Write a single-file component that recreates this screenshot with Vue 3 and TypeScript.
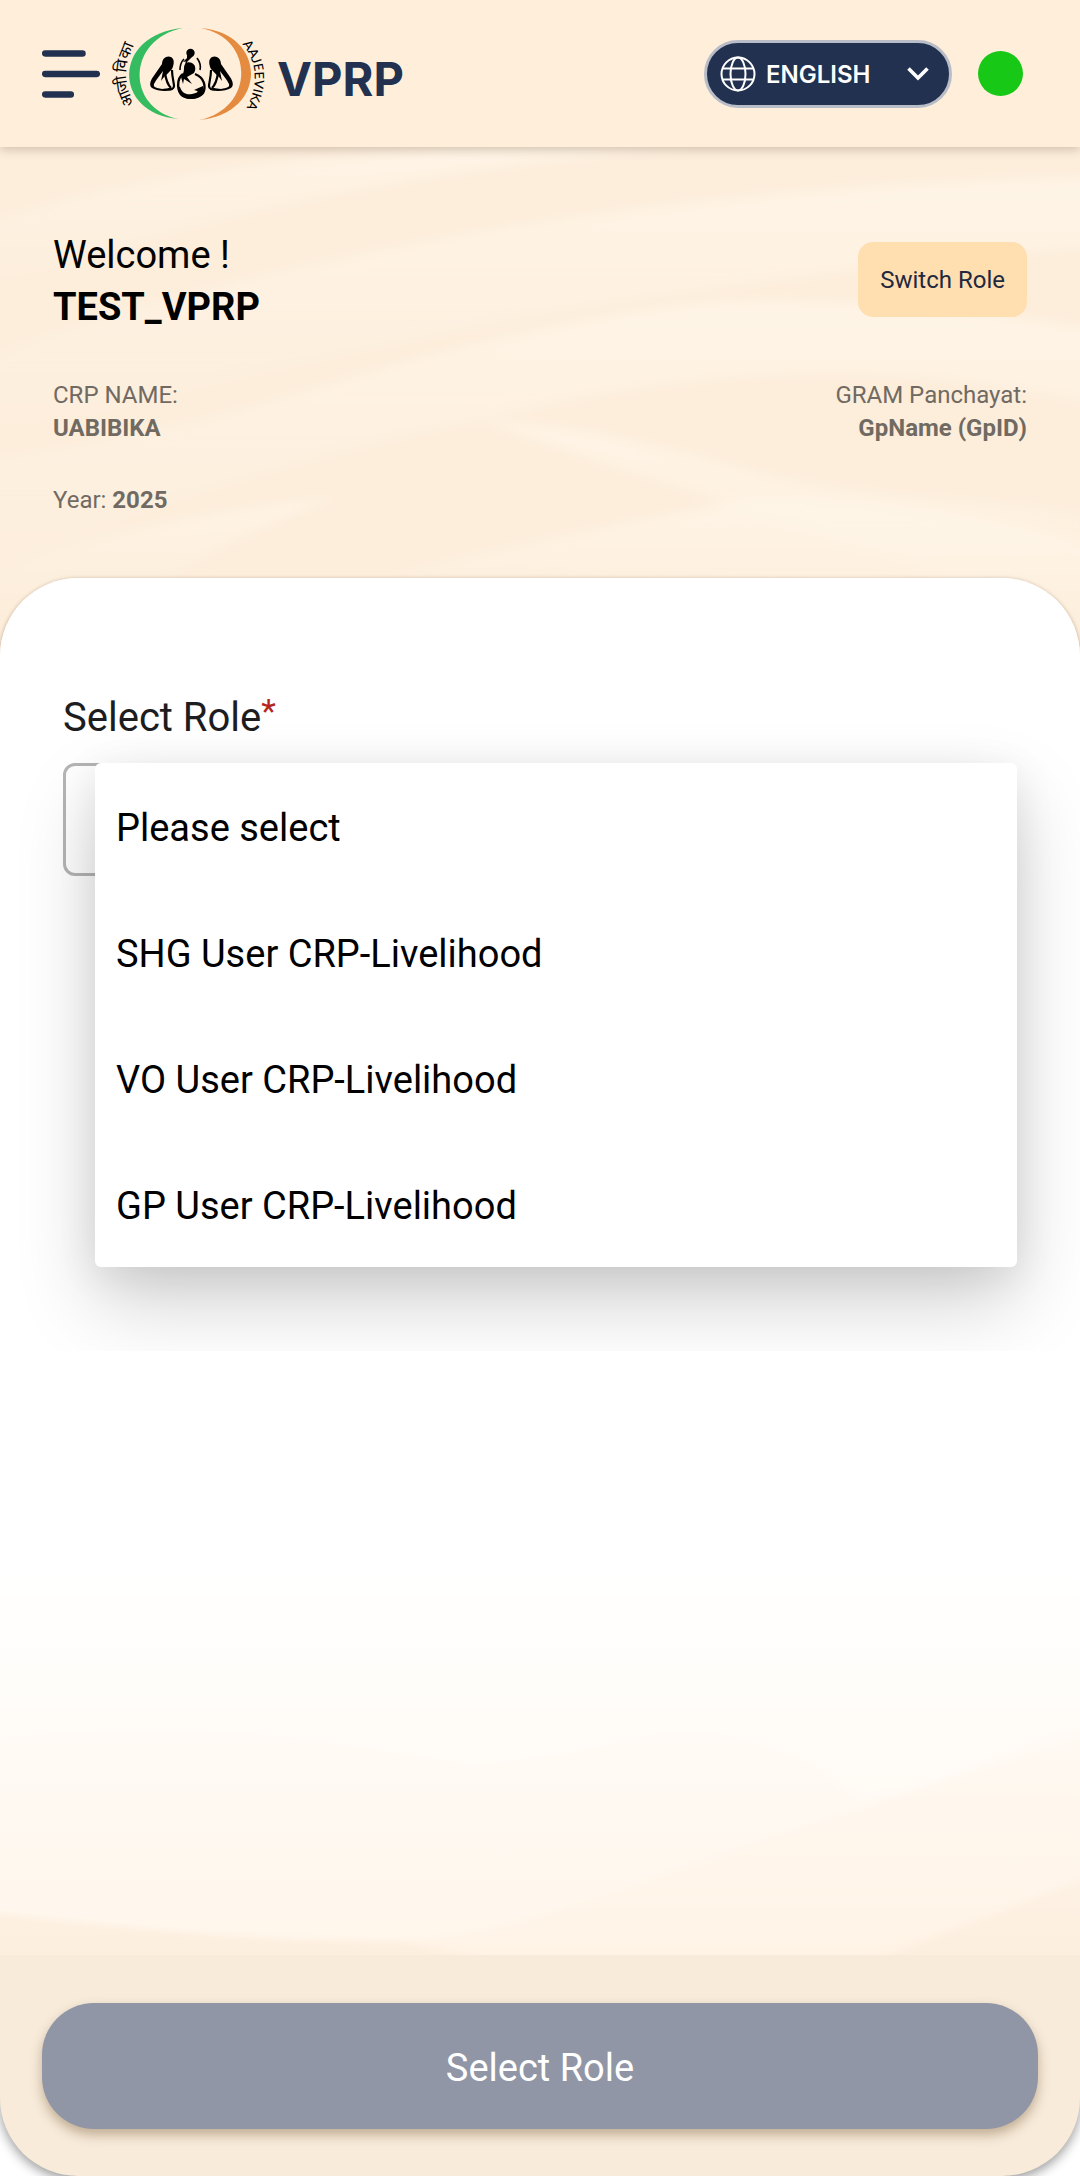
<script setup lang="ts">
import { ref } from 'vue'

interface Fact {
  label: string
  value: string
}

const languages: string[] = ['ENGLISH']
const language = ref<string>('ENGLISH')

const facts: Fact[] = [
  { label: 'CRP NAME:', value: 'UABIBIKA' },
  { label: 'GRAM Panchayat:', value: 'GpName (GpID)' },
]

const roles: string[] = [
  'Please select',
  'SHG User CRP-Livelihood',
  'VO User CRP-Livelihood',
  'GP User CRP-Livelihood',
]
const role = ref<string>('Please select')
const menuOpen = ref<boolean>(true)

function pick(name: string): void {
  role.value = name
  menuOpen.value = false
}
</script>

<template>
  <div class="screen">
    <header class="topbar">
      <button class="menu-button" type="button" aria-label="Open menu">
        <svg width="58" height="50" viewBox="0 0 58 50" fill="none" stroke="#22314f" stroke-width="6.5" stroke-linecap="round">
          <path d="M3.2 4.5H40.5M3.2 25H54.8M3.2 45.5H28.8" />
        </svg>
      </button>
      <svg class="logo" viewBox="110 20 160 106" role="img" aria-label="Aajeevika">
        <path fill="#35bb60" d="M183 27C112 33 112 113 179 118C126 108 126 38 183 27Z" />
        <path fill="#e58b40" d="M201 27C268 33 268 113 199 119C254 108 256 38 201 27Z" />
        <defs>
          <path id="arc-right" d="M242 43Q268 74 241 116" />
        </defs>
        <g class="logo-hindi">
          <text transform="translate(134 103) rotate(-112)">आ</text>
          <text transform="translate(128 90) rotate(-98)">जी</text>
          <text transform="translate(126 72) rotate(-82)">वि</text>
          <text transform="translate(128 59) rotate(-68)">का</text>
        </g>
        <text class="logo-latin"><textPath href="#arc-right">AAJEEVIKA</textPath></text>
        <g>
          <path d="M162 63C162 57 167 54 171 56C175 58 174 64 172 68C169 72 164 75 161 80L163 70C160 74 156 79 154 83C153 86 156 87 162 88L170 87L172 89C166 91 157 90 152 87C149 85 150 80 153 76Z" />
          <path d="M165 72C166 79 168 84 171 87M172 69C172 76 174 82 174 85C174 88 171 89 168 88" fill="none" stroke="#000" stroke-width="2.2" />
        </g>
        <g transform="translate(383 0) scale(-1 1)">
          <path d="M162 63C162 57 167 54 171 56C175 58 174 64 172 68C169 72 164 75 161 80L163 70C160 74 156 79 154 83C153 86 156 87 162 88L170 87L172 89C166 91 157 90 152 87C149 85 150 80 153 76Z" />
          <path d="M165 72C166 79 168 84 171 87M172 69C172 76 174 82 174 85C174 88 171 89 168 88" fill="none" stroke="#000" stroke-width="2.2" />
        </g>
        <circle cx="190.5" cy="52" r="4.2" />
        <path d="M187 54L192 56L188 60L183 61L187 57Z" />
        <path d="M184 58C181 61 180 65 180 69M197 57C200 61 201 65 200 69M187 59L186 63" fill="none" stroke="#000" stroke-width="1.6" />
        <path d="M184 67C184 62 188 60 192 62C196 64 196 69 194 72L187 76L192 83L184 78L183 83L181 76C183 73 184 71 184 67Z" />
        <path d="M183 73C176 78 177 91 183 95C189 98 199 97 203 92C206 86 205 77 195 73" fill="none" stroke="#000" stroke-width="2.4" />
        <path d="M180 86C182 92 186 94 192 93C198 92 200 90 194 89L203 85C205 92 201 98 191 98C182 98 178 93 178 86Z" />
      </svg>
      <h1 class="brand">VPRP</h1>
      <label class="language">
        <svg width="36" height="36" viewBox="0 0 36 36" fill="none" stroke="#fff" stroke-width="2" aria-hidden="true">
          <circle cx="18" cy="18" r="16.5" />
          <ellipse cx="18" cy="18" rx="7.5" ry="16.5" />
          <path d="M2.5 12.5H33.5M2.5 23.5H33.5" />
        </svg>
        <select v-model="language" aria-label="Language">
          <option v-for="item in languages" :key="item">{{ item }}</option>
        </select>
        <svg width="22" height="14" viewBox="0 0 22 14" fill="none" stroke="#fff" stroke-width="3.6" aria-hidden="true">
          <path d="M1.5 1.5L11 11L20.5 1.5" />
        </svg>
      </label>
      <span class="status" role="img" aria-label="Online"></span>
    </header>

    <main class="body">
      <svg class="waves" viewBox="0 0 1080 1808" preserveAspectRatio="none" aria-hidden="true">
        <defs>
          <linearGradient id="haze" x1="0" y1="0" x2="0" y2="1">
            <stop offset="0" stop-color="#fff7ea" stop-opacity="0.7" />
            <stop offset="1" stop-color="#fff7ea" stop-opacity="0" />
          </linearGradient>
          <filter id="soft"><feGaussianBlur stdDeviation="6" /></filter>
          <filter id="edge"><feGaussianBlur stdDeviation="3" /></filter>
        </defs>
        <g fill="url(#haze)" filter="url(#soft)">
          <path d="M-20 78Q138 18 480 0H700C400 20 160 80 -20 150Z" />
          <path d="M-20 210C120 160 260 125 413 96Q740 35 1100 30V100C600 140 200 230 -20 310Z" />
          <path d="M-20 312Q150 290 289 248Q560 165 720 154Q900 150 1100 182V260C900 210 700 220 500 270C300 310 100 370 -20 440Z" />
          <path d="M-20 430Q100 375 340 350Q200 400 140 460H-20Z" />
          <path d="M482 275C580 275 660 300 758 324C880 355 980 345 1100 370V480C950 430 700 350 482 275Z" />
          <path d="M379 430Q560 385 758 351C900 350 1040 380 1100 400V500C800 420 560 430 379 430Z" />
        </g>
        <g filter="url(#edge)">
          <path fill="#fff2e3" d="M-20 1000H1100V1725Q1000 1765 876 1812H480L-20 1700Z" />
          <path fill="#fff5e9" d="M-20 1000H1100V1586Q964 1627 792 1684C620 1740 500 1792 400 1794C240 1794 120 1780 -20 1764Z" />
          <path fill="#fff8ee" d="M-20 1000H1100V1560C1020 1590 960 1640 860 1650C800 1610 740 1570 661 1581C620 1590 560 1610 468 1619C340 1590 200 1560 -20 1590Z" />
        </g>
      </svg>

      <div class="content">
        <section class="welcome">
          <div class="greeting-row">
            <p class="greeting">Welcome !<br /><strong>TEST_VPRP</strong></p>
            <button class="switch-role" type="button">Switch Role</button>
          </div>
          <div class="facts">
            <p v-for="fact in facts" :key="fact.label">
              {{ fact.label }}<br /><strong>{{ fact.value }}</strong>
            </p>
          </div>
          <p class="year">Year: <strong>2025</strong></p>
        </section>

        <section class="card">
          <label class="role-label" for="role">Select Role<sup>*</sup></label>
          <div class="role-field">
            <select id="role" v-model="role" required @mousedown.prevent="menuOpen = !menuOpen">
              <option v-for="name in roles" :key="name">{{ name }}</option>
            </select>
            <div v-if="menuOpen" class="menu-clip">
              <ul class="menu" role="listbox" aria-label="Select Role">
                <li
                  v-for="name in roles"
                  :key="name"
                  role="option"
                  :aria-selected="name === role"
                  @click="pick(name)"
                >
                  {{ name }}
                </li>
              </ul>
            </div>
          </div>
        </section>
      </div>
    </main>

    <footer class="footer">
      <button class="submit" type="button">Select Role</button>
    </footer>
  </div>
</template>

<style>
body {
  margin: 0;
  background: #fff;
}
</style>

<style scoped>
* {
  box-sizing: border-box;
}

p,
h1,
ul {
  margin: 0;
  padding: 0;
}

button,
select {
  font: inherit;
  color: inherit;
  border: 0;
  appearance: none;
}

.screen {
  display: flex;
  flex-direction: column;
  min-height: 100vh;
  overflow: hidden;
  font-family: Roboto, sans-serif;
  color: #000;
}

.topbar {
  position: relative;
  z-index: 1;
  display: flex;
  align-items: center;
  height: 147px;
  padding: 0 57px 0 42px;
  background: #ffefda;
  box-shadow: 0 2px 10px rgba(60, 40, 20, 0.25);
}

.menu-button {
  display: flex;
  padding: 0;
  background: none;
}

.logo {
  width: 160px;
  height: 106px;
  margin-left: 10px;
}

.logo-hindi {
  font: 400 16px "Noto Sans Devanagari", "Noto Sans", sans-serif;
}

.logo-latin {
  font: 500 13px Lato, sans-serif;
}

.brand {
  margin-left: 7px;
  padding-top: 10px;
  font: 700 47px/58px Inter, sans-serif;
  color: #22314f;
}

.language {
  display: flex;
  align-items: center;
  width: 248px;
  height: 68px;
  margin-left: auto;
  padding: 0 20px 0 13px;
  border: 3px solid #b9bdc7;
  border-radius: 34px;
  background: #22314f;
}

.language select {
  flex: 1;
  min-width: 0;
  padding: 2px 0 0 10px;
  background: transparent;
  color: #fff;
  font: 600 24px/32px Inter, sans-serif;
}

.status {
  width: 45px;
  height: 45px;
  margin-left: 26px;
  border-radius: 50%;
  background: #17c816;
}

.body {
  display: grid;
  flex: 1;
  background: #fdeddb;
}

.waves,
.content {
  grid-area: 1 / 1;
}

.waves {
  width: 100%;
  height: 100%;
  min-height: 0;
}

.content {
  display: flex;
  flex-direction: column;
  z-index: 0;
}

.welcome {
  padding: 82px 53px 61px;
}

.greeting-row,
.facts {
  display: flex;
  align-items: center;
  justify-content: space-between;
}

.greeting {
  font-size: 38px;
  line-height: 52px;
}

.switch-role {
  height: 75px;
  margin-bottom: 4px;
  padding: 2px 22px 0;
  border-radius: 15px;
  background: #ffdeb0;
  color: #22293f;
  font-size: 24px;
}

.facts {
  margin-top: 46px;
}

.facts,
.year {
  font-size: 24px;
  line-height: 33px;
  color: #706a62;
}

.facts p:last-child {
  text-align: right;
}

.year {
  margin-top: 39px;
}

.card {
  flex: 1;
  padding: 116px 63px;
  border-radius: 78px 78px 0 0;
  background: linear-gradient(#fff 72%, rgba(255, 255, 255, 0.55) 84%, rgba(255, 255, 255, 0.1));
  box-shadow: 0 1px 4px rgba(80, 50, 20, 0.4);
}

.role-label {
  display: block;
  font-size: 40px;
  line-height: 48px;
  color: #1d1d1f;
}

.role-label sup {
  font-size: 34px;
  line-height: 0;
  vertical-align: 8px;
  color: #b3261e;
}

.role-field {
  position: relative;
  margin-top: 21px;
}

.role-field select {
  display: block;
  width: 100%;
  height: 113px;
  padding: 0 54px;
  border: 3px solid #b5b5b5;
  border-radius: 12px;
  background: #fff;
  font-size: 38px;
}

/* The shadow under the open menu ends on a straight line */
.menu-clip {
  position: absolute;
  top: -84px;
  right: -63px;
  left: -63px;
  padding: 84px 63px 84px 95px;
  overflow: hidden;
  pointer-events: none;
}

.menu {
  list-style: none;
  border-radius: 6px;
  background: #fff;
  box-shadow: 0 36px 80px rgba(0, 0, 0, 0.18), 0 8px 40px rgba(0, 0, 0, 0.08);
  pointer-events: auto;
}

.menu li {
  padding: 4px 21px 0;
  font-size: 38px;
  line-height: 122px;
}

.footer {
  z-index: 1;
  padding: 48px 42px 47px;
  border-radius: 0 0 78px 78px;
  background: #f8ebda;
  box-shadow: 0 4px 12px rgba(0, 0, 0, 0.4);
  clip-path: inset(0 0 -20px);
}

.submit {
  display: block;
  width: 100%;
  height: 126px;
  padding: 4px 0 0;
  border-radius: 52px;
  background: #9096a6;
  box-shadow: 0 6px 12px rgba(90, 60, 20, 0.35);
  color: #fff;
  font-size: 38px;
}
</style>
